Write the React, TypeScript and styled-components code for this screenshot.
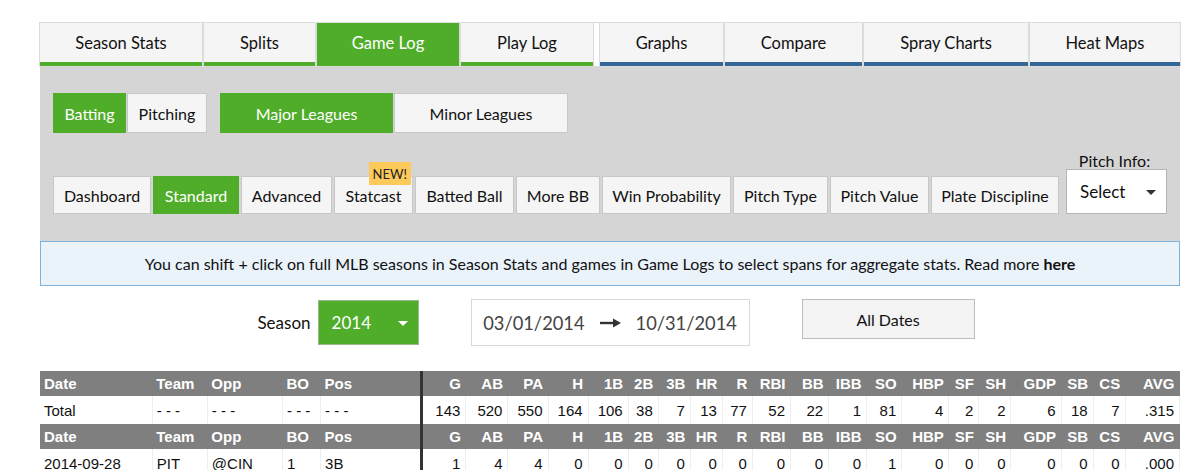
import styled, { createGlobalStyle } from "styled-components";

const GREEN = "#50ad2a";
const BLUE = "#35669a";

const GlobalStyle = createGlobalStyle`
  body {
    margin: 0;
    background: #fff;
    font-family: Lato, "Open Sans", sans-serif;
    color: #111;
  }
`;

const Page = styled.div`
  width: 1140px;
  margin: 22px 0 0 40px;
`;

const TabBar = styled.div`
  display: flex;
  border-top: 1px solid #d6d6d6;
`;

const TabGroup = styled.div<{ $accent: string }>`
  display: flex;
  gap: 2px;
  & + & {
    margin-left: 7px;
  }
  & > * {
    border-bottom: 4px solid ${(p) => p.$accent};
  }
`;

const Tab = styled.div<{ $w: number; $active?: boolean }>`
  width: ${(p) => p.$w}px;
  height: 39px;
  display: flex;
  align-items: center;
  justify-content: center;
  font-size: 16.5px;
  background: ${(p) => (p.$active ? GREEN : "#f5f5f5")};
  color: ${(p) => (p.$active ? "#fff" : "#111")};
  box-shadow: 0 0 0 1px #dcdcdc;
`;

const Panel = styled.div`
  background: #d5d5d5;
  padding: 27px 13px 27px;
  display: flex;
  flex-direction: column;
  gap: 19px;
`;

const Row = styled.div<{ $gap?: number }>`
  display: flex;
  align-items: flex-end;
  gap: ${(p) => p.$gap ?? 0}px;
`;

const Segment = styled.div<{ $gap?: number }>`
  display: flex;
  gap: ${(p) => p.$gap ?? 1}px;
`;

const Btn = styled.div<{ $active?: boolean; $w: number; $h?: number }>`
  position: relative;
  height: ${(p) => p.$h ?? 40}px;
  width: ${(p) => p.$w}px;
  box-sizing: border-box;
  display: flex;
  align-items: center;
  justify-content: center;
  font-size: 16px;
  white-space: nowrap;
  background: ${(p) => (p.$active ? GREEN : "#f5f5f5")};
  color: ${(p) => (p.$active ? "#fff" : "#111")};
  border: 1px solid ${(p) => (p.$active ? GREEN : "#c8c8c8")};
`;

const Badge = styled.span`
  position: absolute;
  top: -15px;
  right: 1px;
  background: #fcc95b;
  color: #222;
  font-size: 13px;
  padding: 4px 4px 3px;
  line-height: 16px;
`;

const PitchInfo = styled.div`
  margin-left: auto;
  display: flex;
  flex-direction: column;
  align-items: center;
  gap: 0;
`;

const PitchLabel = styled.div`
  font-size: 16px;
  line-height: 17px;
  margin-left: -4px;
`;

const SelectBox = styled.div<{ $w: number; $green?: boolean }>`
  width: ${(p) => p.$w}px;
  height: 45px;
  box-sizing: border-box;
  display: flex;
  align-items: center;
  justify-content: space-between;
  padding: 0 10px 0 13px;
  font-size: 17px;
  background: ${(p) => (p.$green ? GREEN : "#fff")};
  color: ${(p) => (p.$green ? "#fff" : "#111")};
  border: 1px solid ${(p) => (p.$green ? "#9ab88c" : "#b5b5b5")};
`;

const Caret = styled.span<{ $color: string }>`
  width: 0;
  height: 0;
  border-left: 5px solid transparent;
  border-right: 5px solid transparent;
  border-top: 5px solid ${(p) => p.$color};
  margin-top: 1px;
`;

const Notice = styled.div`
  height: 45px;
  box-sizing: border-box;
  background: #eaf2fa;
  border: 1px solid #80b3dc;
  display: flex;
  align-items: center;
  justify-content: center;
  font-size: 16px;
  b {
    margin-left: 4px;
  }
`;

const Filters = styled.div`
  display: flex;
  align-items: flex-start;
  justify-content: center;
  margin-top: 13px;
  padding-left: 12px;
  gap: 52px;
`;

const SeasonPick = styled.div`
  display: flex;
  align-items: center;
  gap: 7px;
  margin-top: 1px;
  font-size: 17px;
`;

const DateRange = styled.div`
  width: 279px;
  height: 47px;
  box-sizing: border-box;
  border: 1px solid #d8d8d8;
  display: flex;
  align-items: center;
  justify-content: center;
  gap: 15px;
  font-size: 18.3px;
  color: #444;
  svg {
    margin-top: 1px;
  }
`;

const AllDates = styled.div`
  width: 173px;
  height: 40px;
  box-sizing: border-box;
  background: #f3f3f3;
  border: 1px solid #bdbdbd;
  display: flex;
  align-items: center;
  justify-content: center;
  font-size: 16px;
`;

const Table = styled.table`
  margin-top: 25px;
  width: 1140px;
  border-collapse: collapse;
  table-layout: fixed;
  font-family: "Liberation Sans", Arial, sans-serif;
  font-size: 15px;
`;

const Th = styled.th<{ $num?: boolean; $split?: boolean }>`
  background: #7f7f7f;
  color: #fff;
  font-weight: bold;
  height: 25px;
  padding: 0 ${(p) => (p.$num ? "5px" : "4px")};
  text-align: ${(p) => (p.$num ? "right" : "left")};
  border-left: ${(p) => (p.$split ? "3px solid #333" : "none")};
  white-space: nowrap;
`;

const Td = styled.td<{ $num?: boolean; $split?: boolean }>`
  height: 28px;
  padding: 0 ${(p) => (p.$num ? "5px" : "4px")};
  text-align: ${(p) => (p.$num ? "right" : "left")};
  border-right: 1px solid #eeeeee;
  border-left: ${(p) => (p.$split ? "3px solid #333" : "none")};
  color: #111;
  white-space: nowrap;
`;

const topLeft = [
  { label: "Season Stats", w: 162 },
  { label: "Splits", w: 111 },
  { label: "Game Log", w: 142, active: true },
  { label: "Play Log", w: 132 },
];
const topRight = [
  { label: "Graphs", w: 123 },
  { label: "Compare", w: 137 },
  { label: "Spray Charts", w: 164 },
  { label: "Heat Maps", w: 150 },
];

const statTypes = [
  { label: "Dashboard", w: 98 },
  { label: "Standard", w: 86 },
  { label: "Advanced", w: 91 },
  { label: "Statcast", w: 79 },
  { label: "Batted Ball", w: 99 },
  { label: "More BB", w: 84 },
  { label: "Win Probability", w: 129 },
  { label: "Pitch Type", w: 95 },
  { label: "Pitch Value", w: 99 },
  { label: "Plate Discipline", w: 128 },
];

const infoCols = [
  { key: "Date", w: 112 },
  { key: "Team", w: 55 },
  { key: "Opp", w: 75 },
  { key: "BO", w: 38 },
  { key: "Pos", w: 101 },
];
const statCols = [
  { key: "G", w: 44 },
  { key: "AB", w: 42 },
  { key: "PA", w: 40 },
  { key: "H", w: 40 },
  { key: "1B", w: 40 },
  { key: "2B", w: 30 },
  { key: "3B", w: 32 },
  { key: "HR", w: 32 },
  { key: "R", w: 30 },
  { key: "RBI", w: 38 },
  { key: "BB", w: 38 },
  { key: "IBB", w: 38 },
  { key: "SO", w: 35 },
  { key: "HBP", w: 47 },
  { key: "SF", w: 30 },
  { key: "SH", w: 32 },
  { key: "GDP", w: 50 },
  { key: "SB", w: 32 },
  { key: "CS", w: 32 },
  { key: "AVG", w: 54 },
];

const totalRow = {
  info: ["Total", "- - -", "- - -", "- - -", "- - -"],
  stats: ["143", "520", "550", "164", "106", "38", "7", "13", "77", "52", "22", "1", "81", "4", "2", "2", "6", "18", "7", ".315"],
};
const gameRow = {
  info: ["2014-09-28", "PIT", "@CIN", "1", "3B"],
  stats: ["1", "4", "4", "0", "0", "0", "0", "0", "0", "0", "0", "0", "1", "0", "0", "0", "0", "0", "0", ".000"],
};

function Arrow() {
  return (
    <svg width="21" height="12" viewBox="0 0 21 12">
      <path d="M0 6 H15" stroke="#333" strokeWidth="2.4" />
      <path d="M13 1.5 L21 6 L13 10.5 Z" fill="#333" />
    </svg>
  );
}

function HeaderRow() {
  return (
    <tr>
      {infoCols.map((c) => (
        <Th key={c.key}>{c.key}</Th>
      ))}
      {statCols.map((c, i) => (
        <Th key={c.key} $num $split={i === 0}>
          {c.key}
        </Th>
      ))}
    </tr>
  );
}

function DataRow({ info, stats }: { info: string[]; stats: string[] }) {
  return (
    <tr>
      {info.map((v, i) => (
        <Td key={i}>{v}</Td>
      ))}
      {stats.map((v, i) => (
        <Td key={i} $num $split={i === 0}>
          {v}
        </Td>
      ))}
    </tr>
  );
}

export default function App() {
  return (
    <>
      <GlobalStyle />
      <Page>
        <TabBar>
          <TabGroup $accent={GREEN}>
            {topLeft.map((t) => (
              <Tab key={t.label} $w={t.w} $active={t.active}>
                {t.label}
              </Tab>
            ))}
          </TabGroup>
          <TabGroup $accent={BLUE}>
            {topRight.map((t) => (
              <Tab key={t.label} $w={t.w}>
                {t.label}
              </Tab>
            ))}
          </TabGroup>
        </TabBar>

        <Panel>
          <Row $gap={13}>
            <Segment>
              <Btn $active $w={73}>Batting</Btn>
              <Btn $w={80}>Pitching</Btn>
            </Segment>
            <Segment>
              <Btn $active $w={173}>Major Leagues</Btn>
              <Btn $w={174}>Minor Leagues</Btn>
            </Segment>
          </Row>
          <Row>
            <Segment $gap={2}>
              {statTypes.map((s) => (
                <Btn key={s.label} $w={s.w} $h={38} $active={s.label === "Standard"}>
                  {s.label}
                  {s.label === "Statcast" && <Badge>NEW!</Badge>}
                </Btn>
              ))}
            </Segment>
            <PitchInfo>
              <PitchLabel>Pitch Info:</PitchLabel>
              <SelectBox $w={101}>
                Select
                <Caret $color="#333" />
              </SelectBox>
            </PitchInfo>
          </Row>
        </Panel>

        <Notice>
          You can shift + click on full MLB seasons in Season Stats and games in Game Logs to select spans for aggregate stats. Read more
          <b>here</b>
        </Notice>

        <Filters>
          <SeasonPick>
            Season
            <SelectBox $w={101} $green>
              2014
              <Caret $color="#fff" />
            </SelectBox>
          </SeasonPick>
          <DateRange>
            <span>03/01/2014</span>
            <Arrow />
            <span>10/31/2014</span>
          </DateRange>
          <AllDates>All Dates</AllDates>
        </Filters>

        <Table>
          <colgroup>
            {infoCols.map((c) => (
              <col key={c.key} style={{ width: c.w }} />
            ))}
            {statCols.map((c) => (
              <col key={c.key} style={{ width: c.w }} />
            ))}
          </colgroup>
          <tbody>
            <HeaderRow />
            <DataRow {...totalRow} />
            <HeaderRow />
            <DataRow {...gameRow} />
          </tbody>
        </Table>
      </Page>
    </>
  );
}
